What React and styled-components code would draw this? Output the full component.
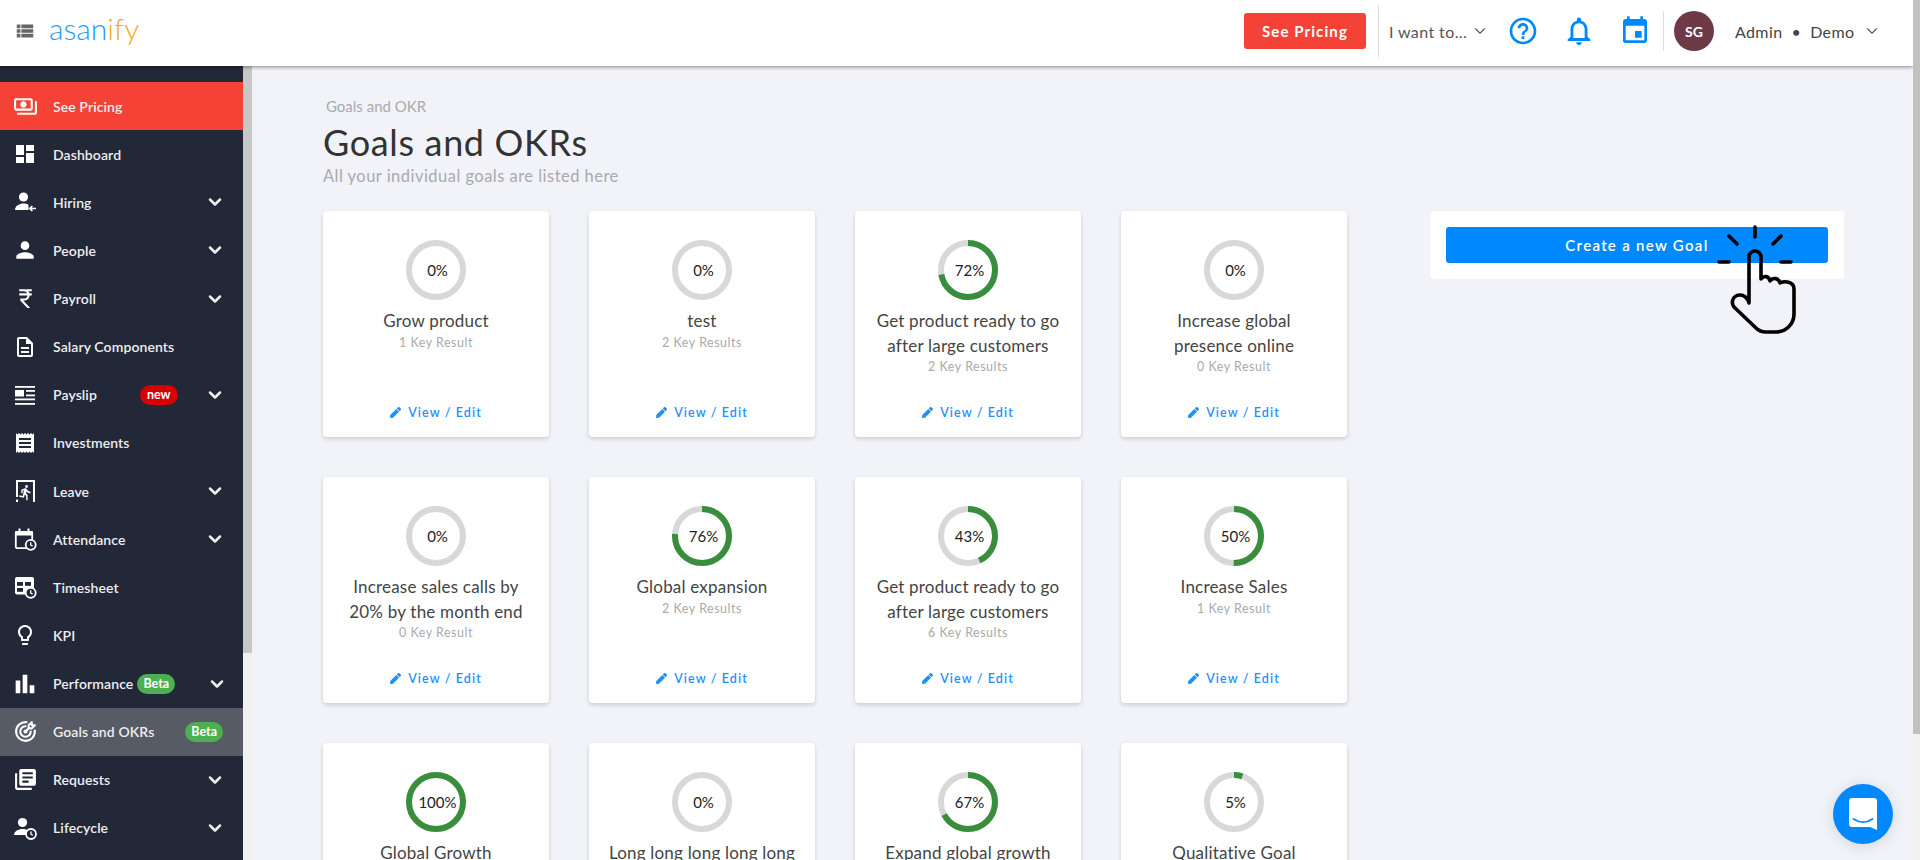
import React from "react";
import styled, { createGlobalStyle } from "styled-components";
import { ChevronDown } from "lucide-react";
import { FaPen } from "react-icons/fa";
import { TbTargetArrow } from "react-icons/tb";
import {
  MdOutlinePayments,
  MdDashboard,
  MdPerson,
  MdCurrencyRupee,
  MdOutlineDescription,
  MdReceipt,
  MdDirectionsRun,
  MdOutlineLightbulb,
  MdBarChart,
  MdLibraryBooks,
  MdViewList,
  MdHelpOutline,
  MdOutlineNotifications,
  MdEvent,
} from "react-icons/md";

const FONT = `Lato, "Noto Sans", sans-serif`;
const NAVY = "#232838";
const BLUE = "#0088ff";

const GlobalStyle = createGlobalStyle`
  body {
    margin: 0;
    padding-right: 7px;
    font-family: ${FONT};
    background: #f1f3f8;
  }
  * {
    box-sizing: border-box;
  }
`;

// Sidebar icons the packages have no match for
const ClockBadge = ({ cx = 17.5, cy = 18 }) => (
  <>
    <circle cx={cx} cy={cy} r="5" fill={NAVY} stroke="#fff" strokeWidth="1.8" />
    <path d={`M${cx} ${cy - 2.6}v2.8l1.9 1.1`} fill="none" stroke="#fff" strokeWidth="1.3" />
  </>
);

const HiringIcon = () => (
  <svg width="24" height="24" viewBox="0 0 24 24" fill="#fff">
    <circle cx="10.5" cy="7" r="4.6" />
    <path d="M2 20c0-4 4.5-6.4 8.5-6.4 2 0 3.6.4 5 1.2V20z" />
    <path d="M23 18.5h-6M19.4 16l-2.6 2.5 2.6 2.5" fill="none" stroke="#fff" strokeWidth="1.7" />
  </svg>
);

const PayslipIcon = () => (
  <svg width="24" height="24" viewBox="0 0 24 24" fill="#fff">
    <rect x="2" y="3" width="20" height="1.8" />
    <rect x="2" y="7" width="9" height="6.5" />
    <rect x="13" y="7" width="9" height="1.8" />
    <rect x="13" y="11.5" width="9" height="1.8" />
    <rect x="2" y="15.5" width="20" height="1.8" />
    <rect x="2" y="20" width="20" height="1.8" />
  </svg>
);

const LeaveIcon = () => (
  <svg width="24" height="24" viewBox="0 0 24 24" fill="#fff">
    <path d="M3 1h19v22h-2V3H5v15H3z" />
    <rect x="3" y="20.5" width="2" height="2.5" />
    <MdDirectionsRun x="4" y="5" size="17" />
  </svg>
);

const AttendanceIcon = () => (
  <svg width="24" height="24" viewBox="0 0 24 24" fill="#fff">
    <rect x="2.8" y="4.8" width="16.4" height="16.4" rx="1.5" fill="none" stroke="#fff" strokeWidth="1.8" />
    <rect x="2" y="4" width="18" height="4.5" rx="1" />
    <rect x="5.5" y="1.5" width="2" height="4" />
    <rect x="14.5" y="1.5" width="2" height="4" />
    <ClockBadge cx={17.7} cy={17.8} />
  </svg>
);

const TimesheetIcon = () => (
  <svg width="24" height="24" viewBox="0 0 24 24" fill="#fff">
    <rect x="2" y="2" width="19" height="17.5" rx="2" />
    <g fill={NAVY}>
      <rect x="4" y="7" width="6" height="3.8" />
      <rect x="12" y="7" width="6" height="3.8" />
      <rect x="4" y="13" width="6" height="3.8" />
    </g>
    <ClockBadge cx={17.7} cy={17.8} />
  </svg>
);

const LifecycleIcon = () => (
  <svg width="24" height="24" viewBox="0 0 24 24" fill="#fff">
    <circle cx="9.5" cy="6.5" r="4.6" />
    <path d="M1 19c0-3.8 4.6-6 8.5-6 2 0 3.6.4 5 1.2V19z" />
    <ClockBadge cx={18} cy={18} />
  </svg>
);

const PointerHand = () => (
  <Pointer viewBox="0 0 100 120" fill="none" stroke="#000" strokeWidth="3.6" strokeLinecap="round" strokeLinejoin="round">
    <path d="M45 8v10M19 17l8 8M71 17l-8 8M9 43h10M71 43h10" />
    <path d="M39 84V38a6 6 0 0 1 12 0v22c3-4 8-3 9 2 3-4 9-3 10 2 4-2 14-2 14 6v25c0 10-8 18-18 18H56c-4 0-8-2-10-4L24 88c-4-6 0-12 6-12 4 0 7 2 9 8z" />
  </Pointer>
);

const NAV_ITEMS = [
  { label: "See Pricing", icon: <MdOutlinePayments size={25} />, tone: "promo" },
  { label: "Dashboard", icon: <MdDashboard size={24} /> },
  { label: "Hiring", icon: <HiringIcon />, caret: true },
  { label: "People", icon: <MdPerson size={26} />, caret: true },
  { label: "Payroll", icon: <MdCurrencyRupee size={25} />, caret: true },
  { label: "Salary Components", icon: <MdOutlineDescription size={24} /> },
  { label: "Payslip", icon: <PayslipIcon />, caret: true, badge: "new", badgeGap: "43px" },
  { label: "Investments", icon: <MdReceipt size={24} /> },
  { label: "Leave", icon: <LeaveIcon />, caret: true },
  { label: "Attendance", icon: <AttendanceIcon />, caret: true },
  { label: "Timesheet", icon: <TimesheetIcon /> },
  { label: "KPI", icon: <MdOutlineLightbulb size={24} /> },
  { label: "Performance", icon: <MdBarChart size={28} />, caret: true, badge: "Beta", badgeGap: "4px", nudge: true },
  { label: "Goals and OKRs", icon: <TbTargetArrow size={25} />, tone: "active", badge: "Beta", badgeGap: "auto" },
  { label: "Requests", icon: <MdLibraryBooks size={25} />, caret: true },
  { label: "Lifecycle", icon: <LifecycleIcon />, caret: true },
];

const GOALS = [
  { pct: 0, title: "Grow product", sub: "1 Key Result" },
  { pct: 0, title: "test", sub: "2 Key Results" },
  { pct: 72, title: "Get product ready to go after large customers", sub: "2 Key Results" },
  { pct: 0, title: "Increase global presence online", sub: "0 Key Result" },
  { pct: 0, title: "Increase sales calls by 20% by the month end", sub: "0 Key Result" },
  { pct: 76, title: "Global expansion", sub: "2 Key Results" },
  { pct: 43, title: "Get product ready to go after large customers", sub: "6 Key Results" },
  { pct: 50, title: "Increase Sales", sub: "1 Key Result" },
  { pct: 100, title: "Global Growth", sub: "3 Key Results" },
  { pct: 0, title: "Long long long long long long goal", sub: "1 Key Result", wide: true },
  { pct: 67, title: "Expand global growth", sub: "3 Key Results" },
  { pct: 5, title: "Qualitative Goal", sub: "1 Key Result" },
];

const Ring = ({ pct }) => {
  const r = 27;
  const length = 2 * Math.PI * r;
  return (
    <RingWrap>
      <svg width="60" height="60" viewBox="0 0 60 60">
        <circle cx="30" cy="30" r={r} fill="none" stroke="#d8d8d8" strokeWidth="6" />
        {pct > 0 && (
          <circle
            cx="30"
            cy="30"
            r={r}
            fill="none"
            stroke="#388e3c"
            strokeWidth="6"
            strokeDasharray={`${(length * pct) / 100} ${length}`}
            transform="rotate(-90 30 30)"
          />
        )}
      </svg>
      <RingLabel>{pct}%</RingLabel>
    </RingWrap>
  );
};

const App = () => {
  return (
    <>
      <GlobalStyle />
      <Header>
        <MenuButton>
          <MdViewList size={22} />
        </MenuButton>
        <Logo>
          asan<LogoAccent>ify</LogoAccent>
        </Logo>
        <HeaderRight>
          <PricingButton>See Pricing</PricingButton>
          <TallDivider />
          <WantTo>
            I want to...
            <ChevronDown size={18} strokeWidth={1.5} />
          </WantTo>
          <HeaderIcon>
            <MdHelpOutline size={32} />
          </HeaderIcon>
          <HeaderIcon>
            <MdOutlineNotifications size={34} />
          </HeaderIcon>
          <HeaderIcon>
            <MdEvent size={32} />
          </HeaderIcon>
          <ShortDivider />
          <Avatar>SG</Avatar>
          <UserName>Admin &nbsp;•&nbsp; Demo</UserName>
          <ChevronDown size={18} strokeWidth={1.5} color="#555" />
        </HeaderRight>
      </Header>
      <Body>
        <Sidebar>
          <NavList>
            {NAV_ITEMS.map((item) => (
              <NavItem key={item.label} $tone={item.tone}>
                <NavIcon>{item.icon}</NavIcon>
                <NavLabel>{item.label}</NavLabel>
                {item.badge && (
                  <NavBadge $kind={item.badge} $gap={item.badgeGap}>
                    {item.badge}
                  </NavBadge>
                )}
                {item.caret && (
                  <NavCaret $nudge={item.nudge}>
                    <ChevronDown size={20} strokeWidth={3} />
                  </NavCaret>
                )}
              </NavItem>
            ))}
          </NavList>
          <SideRail>
            <SideThumb />
          </SideRail>
        </Sidebar>
        <Main>
          <Breadcrumb>Goals and OKR</Breadcrumb>
          <Title>Goals and OKRs</Title>
          <Subtitle>All your individual goals are listed here</Subtitle>
          <Columns>
            <GoalGrid>
              {GOALS.map((goal, i) => (
                <GoalCard key={i}>
                  <Ring pct={goal.pct} />
                  <GoalTitle $wide={goal.wide}>{goal.title}</GoalTitle>
                  <GoalSub>{goal.sub}</GoalSub>
                  <ViewEdit>
                    <FaPen size={11} />
                    View / Edit
                  </ViewEdit>
                </GoalCard>
              ))}
            </GoalGrid>
            <CreatePanel>
              <CreateButton>Create a new Goal</CreateButton>
              <PointerHand />
            </CreatePanel>
          </Columns>
        </Main>
      </Body>
      <PageRail>
        <PageThumb />
      </PageRail>
      <ChatBubble>
        <svg width="28" height="32" viewBox="0 0 28 32">
          <path d="M3 0h22a3 3 0 0 1 3 3v29l-7-3H3a3 3 0 0 1-3-3V3a3 3 0 0 1 3-3z" fill="#fff" />
          <path d="M4.5 21c6 4 13 4 19 0" fill="none" stroke={BLUE} strokeWidth="1.8" strokeLinecap="round" />
        </svg>
      </ChatBubble>
    </>
  );
};

const Header = styled.header`
  position: sticky;
  top: 0;
  z-index: 5;
  height: 66px;
  display: flex;
  align-items: center;
  background: #fff;
  box-shadow: 0 1px 4px rgba(0, 0, 0, 0.45);
`;
const MenuButton = styled.div`
  display: flex;
  margin-left: 14px;
  margin-bottom: 4px;
  color: #666;
`;
const Logo = styled.div`
  margin-left: 13px;
  margin-bottom: 11px;
  font-size: 30px;
  font-weight: 300;
  color: #1e9bff;
`;
const LogoAccent = styled.span`
  color: #ffa726;
`;
const HeaderRight = styled.div`
  margin-left: auto;
  margin-bottom: 4px;
  display: flex;
  align-items: center;
  padding-right: 32.5px;
`;
const PricingButton = styled.button`
  width: 122px;
  height: 36px;
  border: 0;
  border-radius: 3px;
  background: #f44336;
  color: #fff;
  font-family: ${FONT};
  font-size: 15px;
  font-weight: 700;
  letter-spacing: 1.1px;
`;
const TallDivider = styled.div`
  width: 1px;
  height: 52px;
  margin-left: 12px;
  background: #ddd;
`;
const WantTo = styled.div`
  display: flex;
  align-items: center;
  gap: 4px;
  margin-left: 10px;
  width: 106px;
  font-size: 16px;
  color: #555;
  letter-spacing: 0.4px;
  white-space: nowrap;
  svg {
    flex-shrink: 0;
  }
`;
const HeaderIcon = styled.div`
  display: flex;
  justify-content: center;
  width: 56px;
  color: ${BLUE};
`;
const ShortDivider = styled.div`
  width: 1px;
  height: 40px;
  background: #ddd;
`;
const Avatar = styled.div`
  width: 40px;
  height: 40px;
  margin-left: 10px;
  border-radius: 50%;
  display: flex;
  align-items: center;
  justify-content: center;
  background: #6d3a46;
  color: #fff;
  font-size: 14px;
  font-weight: 700;
`;
const UserName = styled.div`
  margin: 0 8px 0 21px;
  font-size: 16px;
  color: #444;
  letter-spacing: 0.4px;
`;
const Body = styled.div`
  display: flex;
  align-items: flex-start;
`;
const Sidebar = styled.aside`
  position: sticky;
  top: 66px;
  flex: 0 0 252px;
  height: calc(100vh - 66px);
  display: flex;
`;
const NavList = styled.nav`
  flex: 1;
  min-width: 0;
  padding-top: 16px;
  overflow: hidden;
  background: ${NAVY};
`;
const SideRail = styled.div`
  flex: 0 0 9px;
  background: #f1f1f1;
`;
const SideThumb = styled.div`
  height: 587px;
  background: #c8c8c8;
`;
const PageRail = styled.div`
  position: fixed;
  top: 0;
  right: 0;
  z-index: 6;
  width: 7px;
  height: 100vh;
  background: #f1f1f1;
`;
const PageThumb = styled.div`
  height: 734px;
  background: #c1c1c1;
`;
const navTones = {
  promo: "#f44336",
  active: "#575b66",
};
const NavItem = styled.div`
  height: 48.13px;
  display: flex;
  align-items: center;
  padding-left: 13px;
  background: ${(p) => navTones[p.$tone] || "transparent"};
  color: #eee;
`;
const NavIcon = styled.div`
  flex: 0 0 24px;
  min-width: 0;
  height: 24px;
  display: flex;
  align-items: center;
  justify-content: center;
  color: #fff;
  svg {
    flex-shrink: 0;
  }
`;
const NavLabel = styled.span`
  margin-left: 16px;
  font-size: 14px;
  font-weight: 600;
  letter-spacing: 0.1px;
  white-space: nowrap;
`;
const NavBadge = styled.span`
  height: 20px;
  margin-left: ${(p) => p.$gap};
  margin-right: ${(p) => (p.$gap === "auto" ? "20px" : "0")};
  padding: 0 ${(p) => (p.$kind === "new" ? "7px" : "6px")};
  border-radius: 10px;
  display: flex;
  align-items: center;
  justify-content: center;
  background: ${(p) => (p.$kind === "new" ? "#d50000" : "#4caf50")};
  color: #fff;
  font-size: 12.5px;
  font-weight: 700;
`;
const NavCaret = styled.div`
  display: flex;
  margin-left: auto;
  margin-right: ${(p) => (p.$nudge ? "16px" : "18px")};
`;
const Main = styled.main`
  flex: 1;
  min-width: 0;
  padding: 32px 0 37px 71px;
`;
const Breadcrumb = styled.div`
  margin-left: 3px;
  font-size: 15px;
  line-height: 16px;
  color: #aaa;
`;
const Title = styled.h1`
  margin: 7px 0 0;
  font-size: 36px;
  line-height: 42px;
  font-weight: 400;
  letter-spacing: 0.65px;
  color: #333;
`;
const Subtitle = styled.div`
  margin-top: 3px;
  font-size: 16.5px;
  line-height: 20px;
  letter-spacing: 0.47px;
  color: #aaa;
`;
const Columns = styled.div`
  display: flex;
  align-items: flex-start;
  gap: 83px;
  margin-top: 25px;
`;
const GoalGrid = styled.div`
  display: grid;
  grid-template-columns: repeat(4, 226px);
  grid-auto-rows: 226px;
  gap: 40px;
`;
const GoalCard = styled.div`
  display: flex;
  flex-direction: column;
  align-items: center;
  padding: 29px 10px 17px;
  background: #fff;
  border-radius: 4px;
  box-shadow: 0 2px 4px rgba(0, 0, 0, 0.16);
`;
const RingWrap = styled.div`
  position: relative;
  width: 60px;
  height: 60px;
  flex-shrink: 0;
  svg {
    display: block;
  }
`;
const RingLabel = styled.span`
  position: absolute;
  inset: 0;
  display: flex;
  align-items: center;
  justify-content: center;
  padding-left: 3px;
  font-size: 15px;
  color: #222;
`;
const GoalTitle = styled.div`
  max-width: ${(p) => (p.$wide ? "200px" : "185px")};
  margin-top: 9px;
  font-size: 17px;
  line-height: 24.5px;
  letter-spacing: 0.2px;
  text-align: center;
  color: #444;
`;
const GoalSub = styled.div`
  margin-top: 1px;
  font-size: 12.5px;
  letter-spacing: 0.5px;
  color: #aaa;
`;
const ViewEdit = styled.div`
  margin-top: auto;
  display: flex;
  align-items: center;
  gap: 7px;
  font-size: 12.5px;
  font-weight: 600;
  letter-spacing: 1.1px;
  color: #1e90ff;
`;
const CreatePanel = styled.div`
  position: relative;
  width: 414px;
  height: 68px;
  padding: 16px;
  background: #fff;
  border-radius: 4px;
`;
const CreateButton = styled.button`
  display: block;
  width: 100%;
  height: 36px;
  border: 0;
  border-radius: 3px;
  background: ${BLUE};
  color: #fff;
  font-family: ${FONT};
  font-size: 15px;
  font-weight: 600;
  letter-spacing: 1.3px;
`;
const Pointer = styled.svg`
  position: absolute;
  left: 280px;
  top: 8px;
  width: 100px;
  height: 120px;
`;
const ChatBubble = styled.div`
  position: fixed;
  right: 27px;
  bottom: 16px;
  width: 60px;
  height: 60px;
  border-radius: 50%;
  display: flex;
  align-items: center;
  justify-content: center;
  background: ${BLUE};
  box-shadow: 0 2px 16px rgba(0, 0, 0, 0.12);
`;

export default App;
